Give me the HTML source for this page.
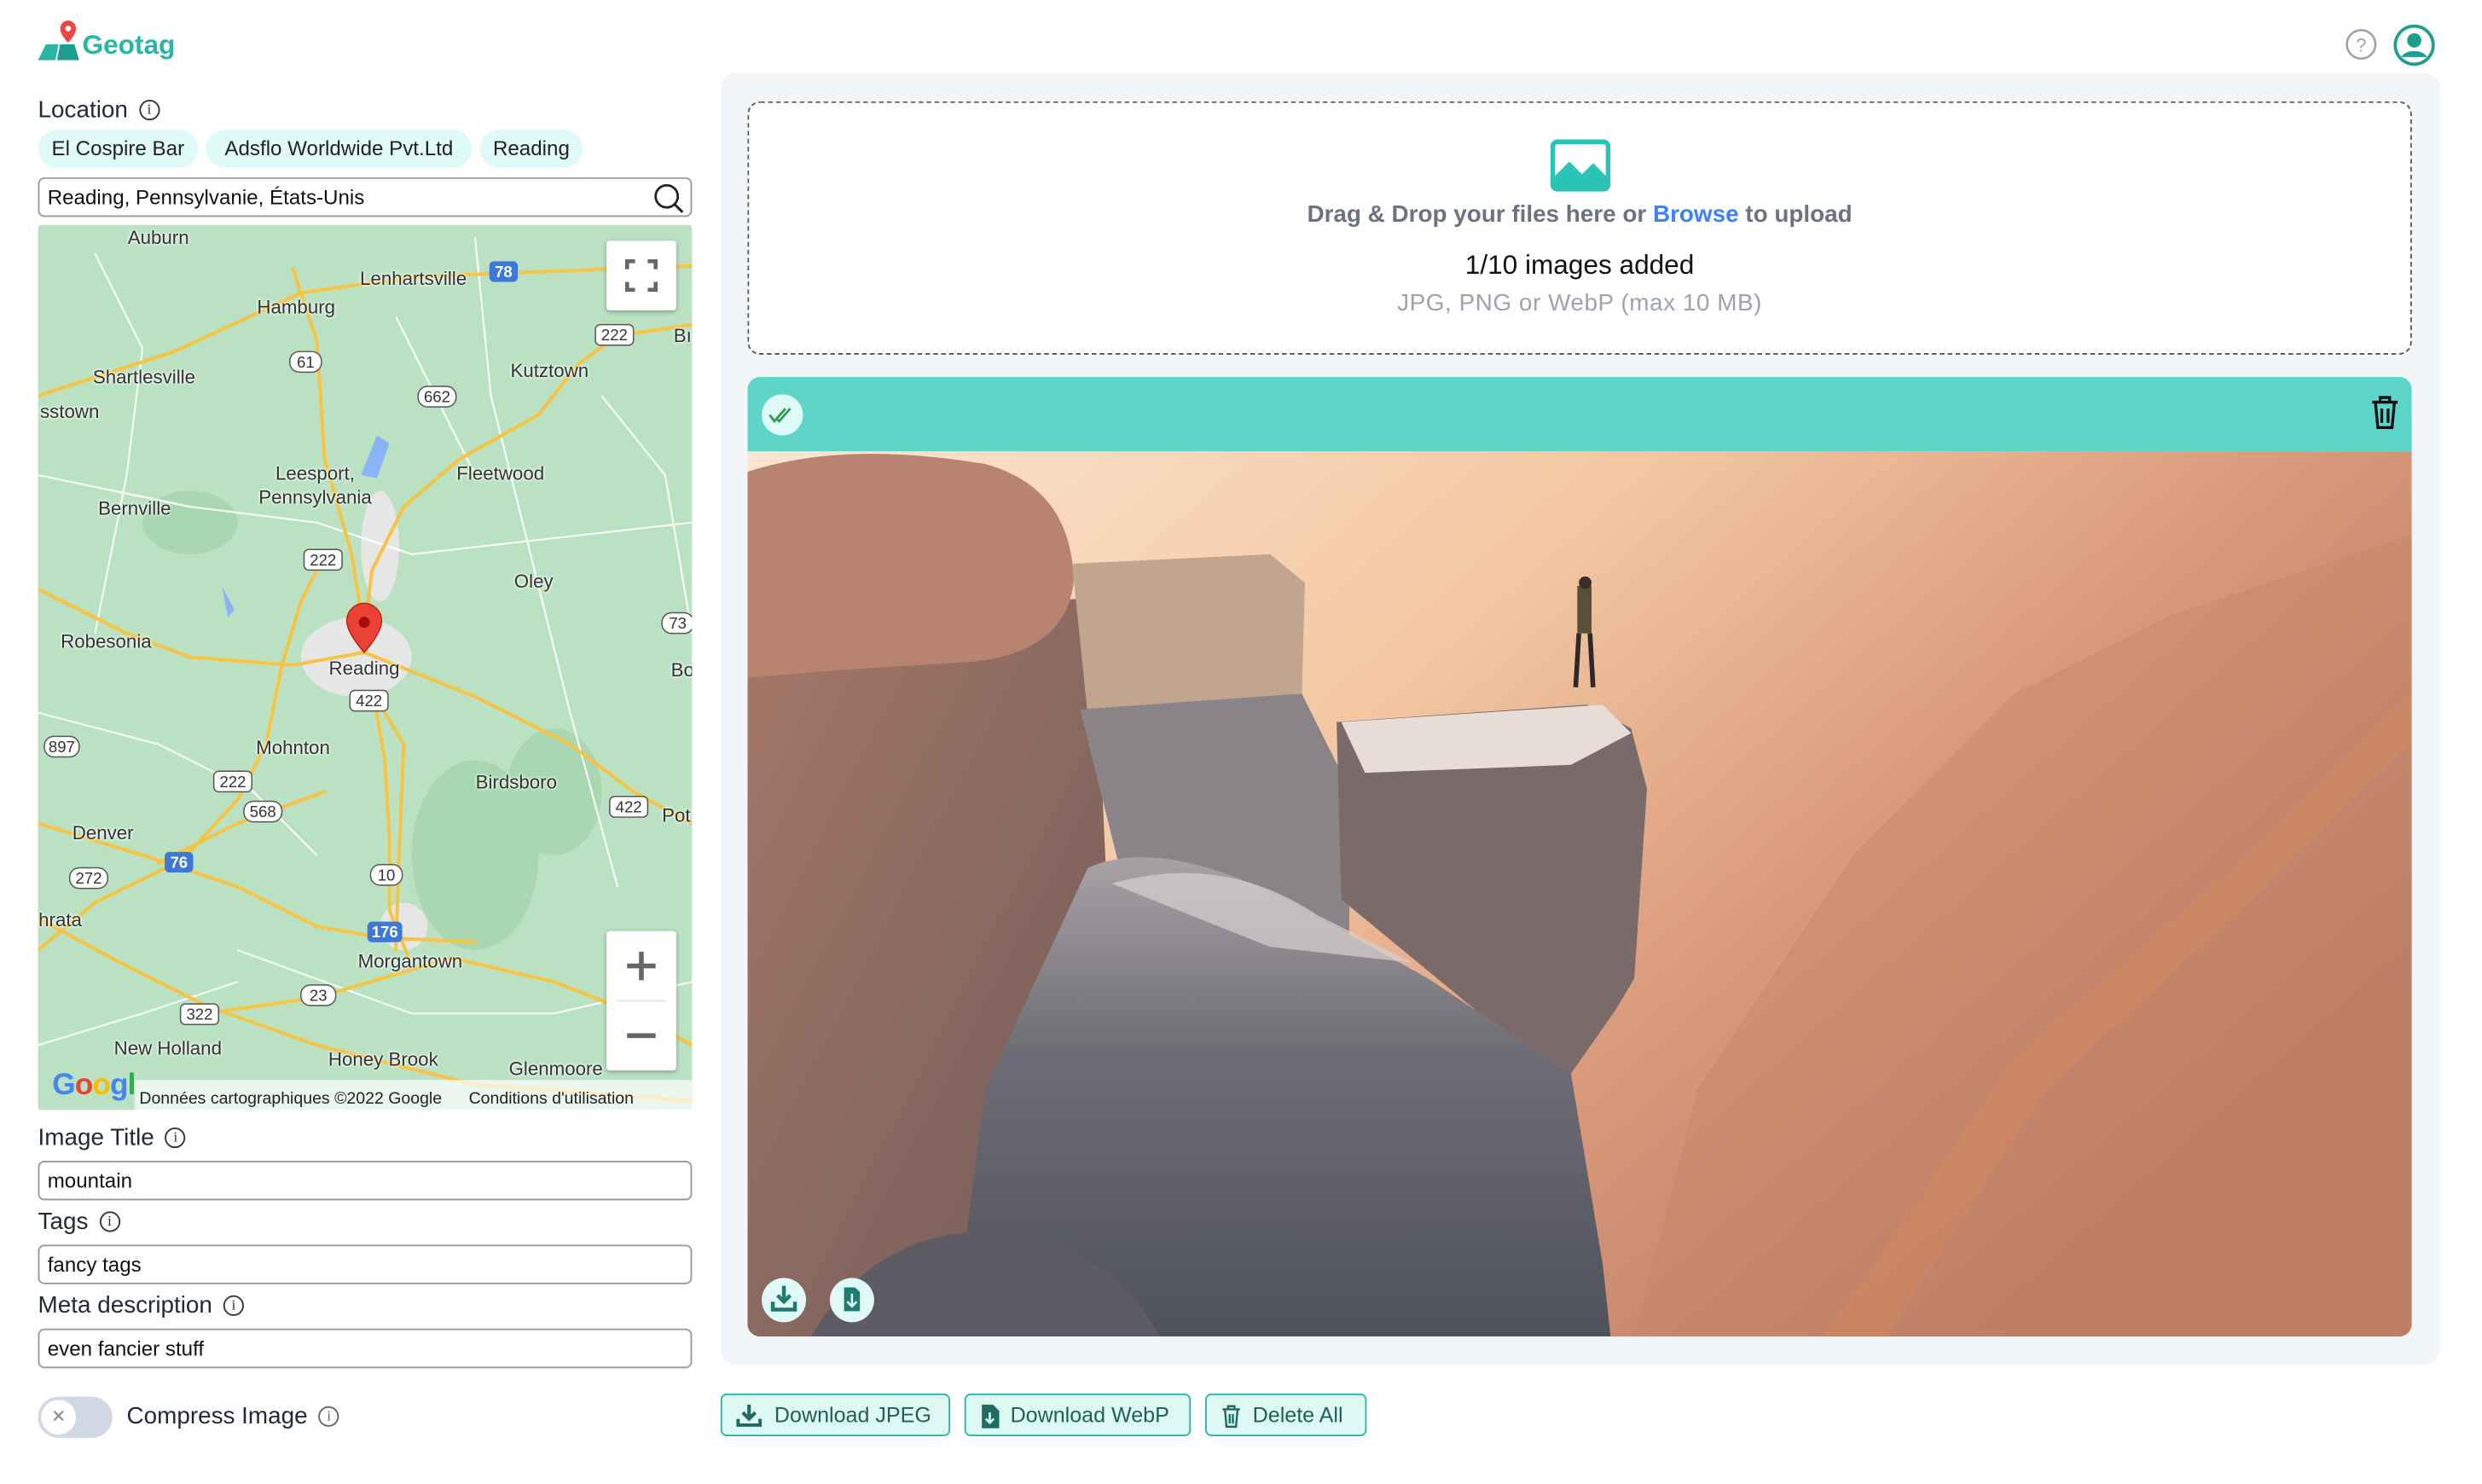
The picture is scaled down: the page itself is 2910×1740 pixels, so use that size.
<!DOCTYPE html>
<html><head><meta charset="utf-8">
<style>
html,body{margin:0;padding:0;background:#fff;width:2910px;height:1738px;overflow:hidden}
#r{position:absolute;left:0;top:0;width:1568px;height:937px;transform:scale(1.8567);transform-origin:0 0;font-family:"Liberation Sans",sans-serif;color:#1f2937}
.abs{position:absolute}
.lbl{position:absolute;left:24px;font-size:15px;color:#1f2937}
.info{display:inline-block;width:11px;height:11px;border:1.2px solid #333;border-radius:50%;font-size:9px;line-height:11px;text-align:center;vertical-align:2px;margin-left:7px;font-family:"Liberation Serif",serif}
.inp{position:absolute;left:24px;width:413px;height:25px;border:1.3px solid #999;border-radius:4px;font-size:13px;line-height:23px;padding-left:5px;box-sizing:border-box;color:#111}
.chip{position:absolute;top:82px;height:24px;line-height:24px;background:#dffaf8;border-radius:12px;font-size:13px;color:#222;text-align:center}
.ml{position:absolute;font-size:12px;color:#333;text-shadow:0 0 2px #fff,0 0 2px #fff;white-space:nowrap;transform:translate(-50%,-50%)}
.btn{position:absolute;top:880px;height:27px;border:1.3px solid #2bb5a5;border-radius:4px;background:#ddf7f3;color:#1f5f5a;font-size:13.5px;line-height:25px;box-sizing:border-box}
.btn svg{position:absolute;left:9px;top:6px}
</style></head><body><div id="r">

<svg class="abs" style="left:23px;top:11px" width="30" height="28" viewBox="0 0 30 28">
<path d="M1 27 L6 17 L14 17 L12 27 Z" fill="#2bb5a5"/><path d="M13 27 L15 17 L24 17 L27 27 Z" fill="#1f9e90"/>
<path d="M20 2 a5 5 0 0 1 5 5 c0 4 -5 9 -5 9 c0 0 -5 -5 -5 -9 a5 5 0 0 1 5 -5z" fill="#ef4444"/><circle cx="20" cy="7" r="1.8" fill="#fff"/>
</svg>
<div class="abs" style="left:52px;top:19px;font-size:17px;font-weight:bold;color:#2bb5a5">Geotag</div>

<svg class="abs" style="left:1481px;top:18px" width="20" height="20" viewBox="0 0 20 20"><circle cx="10" cy="10" r="9" fill="none" stroke="#9ca3af" stroke-width="1.4"/><text x="10" y="14.5" font-size="12" text-anchor="middle" fill="#9ca3af" font-family="Liberation Sans">?</text></svg>
<svg class="abs" style="left:1511px;top:15px" width="27" height="27" viewBox="0 0 27 27"><circle cx="13.5" cy="13.5" r="12" fill="none" stroke="#1f9e90" stroke-width="2"/><circle cx="13.5" cy="10.5" r="4.5" fill="#1f9e90"/><path d="M5.5 21 c2-5 14-5 16 0" fill="#1f9e90"/></svg>

<div class="lbl" style="top:61px">Location<span class="info">i</span></div>
<div class="chip" style="left:24px;width:101px">El Cospire Bar</div>
<div class="chip" style="left:130px;width:168px">Adsflo Worldwide Pvt.Ltd</div>
<div class="chip" style="left:303px;width:65px">Reading</div>
<div class="inp" style="top:112px">Reading, Pennsylvanie, États-Unis</div>
<svg class="abs" style="left:411px;top:114px" width="22" height="22" viewBox="0 0 22 22"><circle cx="10" cy="10" r="7" fill="none" stroke="#222" stroke-width="1.5"/><path d="M15 15 L20 20" stroke="#222" stroke-width="1.6"/></svg>

<div class="abs" style="left:24px;top:142px;width:413px;height:559px;background:#bbe1c3;overflow:hidden;border-radius:2px">
<svg class="abs" style="left:0;top:0" width="413" height="559" viewBox="24 142 413 559">
<g fill="#9fd3a9" opacity=".7"><ellipse cx="300" cy="540" rx="40" ry="60"/><ellipse cx="350" cy="500" rx="30" ry="40"/><ellipse cx="120" cy="330" rx="30" ry="20"/></g>
<g fill="#e6e6e6"><ellipse cx="225" cy="415" rx="35" ry="25"/><ellipse cx="240" cy="345" rx="12" ry="35"/><ellipse cx="255" cy="585" rx="15" ry="15"/></g>
<g fill="#8ab4f8"><path d="M228 300 l10 -25 l8 5 l-8 22z"/><path d="M140 370 l8 15 l-4 5z"/></g>
<g fill="none" stroke="#fff" stroke-width="1.2" opacity=".9">
<path d="M24 300 L120 320 L200 330 L260 350 L437 330"/><path d="M60 160 L90 220 L80 300 L60 400"/><path d="M300 150 L310 250 L330 330 L360 450 L390 560"/><path d="M24 450 L100 470 L160 500 L200 540"/><path d="M150 600 L260 640 L350 640 L437 620"/><path d="M380 250 L420 300 L437 400"/><path d="M24 660 L90 640 L150 620"/><path d="M250 200 L280 260 L300 300"/>
</g>
<g fill="none" stroke="#f5c445" stroke-width="2.2" stroke-linecap="round">
<path d="M24 250 L110 222 L190 185 L260 175 L330 172 L437 168"/>
<path d="M437 205 L390 212 L365 230 L340 262 L290 290 L255 320 L235 360 L230 398"/>
<path d="M185 170 L200 215 L205 290 L222 350 L230 398"/>
<path d="M24 372 L80 400 L120 415 L185 420 L230 412 L300 440 L360 470 L400 500 L437 520"/>
<path d="M205 350 L190 380 L178 420 L168 470 L150 505 L115 543 L60 570 L24 600"/>
<path d="M236 440 L243 480 L246 530 L246 575 L258 605"/>
<path d="M237 440 L255 470 L252 540 L250 600"/>
<path d="M24 520 L90 540 L150 560 L200 585 L240 592 L300 595"/>
<path d="M24 580 L80 610 L130 635 L200 660 L300 685 L437 695"/>
<path d="M130 640 L200 630 L285 605 L350 620 L400 640 L437 660"/>
<path d="M100 545 L150 520 L205 500"/>
</g>
<g font-family="Liberation Sans" font-size="10" text-anchor="middle">
<g fill="#fff" stroke="#555" stroke-width=".8"><rect x="183" y="222" width="20" height="13" rx="6"/><rect x="264" y="244" width="24" height="13" rx="6"/><rect x="192" y="347" width="24" height="13" rx="3"/><rect x="221" y="436" width="24" height="13" rx="3"/><rect x="28" y="465" width="22" height="13" rx="6"/><rect x="135" y="487" width="24" height="13" rx="3"/><rect x="154" y="506" width="24" height="13" rx="6"/><rect x="44" y="548" width="24" height="13" rx="6"/><rect x="234" y="546" width="20" height="13" rx="6"/><rect x="114" y="634" width="24" height="13" rx="3"/><rect x="190" y="622" width="22" height="13" rx="6"/><rect x="376" y="205" width="24" height="13" rx="3"/><rect x="385" y="503" width="24" height="13" rx="3"/><rect x="418" y="387" width="20" height="13" rx="6"/></g>
<g fill="#333"><text x="193" y="232">61</text><text x="276" y="254">662</text><text x="204" y="357">222</text><text x="233" y="446">422</text><text x="39" y="475">897</text><text x="147" y="497">222</text><text x="166" y="516">568</text><text x="56" y="558">272</text><text x="244" y="556">10</text><text x="126" y="644">322</text><text x="201" y="632">23</text><text x="388" y="215">222</text><text x="397" y="513">422</text><text x="428" y="397">73</text></g>
<g fill="#3b78d8"><rect x="309" y="165" width="18" height="13" rx="3"/><rect x="104" y="538" width="18" height="13" rx="3"/><rect x="232" y="582" width="22" height="13" rx="3"/></g>
<g fill="#fff" font-weight="bold"><text x="318" y="175">78</text><text x="113" y="548">76</text><text x="243" y="592">176</text></g>
</g>
<path d="M230 381 a11 11 0 0 1 11 11 c0 8 -11 20 -11 20 c0 0 -11 -12 -11 -20 a11 11 0 0 1 11 -11z" fill="#ea4335" stroke="#b3261e" stroke-width=".8"/><circle cx="230" cy="393" r="3.5" fill="#a50e0e"/>
</svg>
<div class="ml" style="left:76px;top:8px">Auburn</div>
<div class="ml" style="left:237px;top:34px">Lenhartsville</div>
<div class="ml" style="left:163px;top:52px">Hamburg</div>
<div class="ml" style="left:67px;top:96px">Shartlesville</div>
<div class="ml" style="left:20px;top:118px">sstown</div>
<div class="ml" style="left:323px;top:92px">Kutztown</div>
<div class="ml" style="left:175px;top:157px">Leesport,</div>
<div class="ml" style="left:175px;top:172px">Pennsylvania</div>
<div class="ml" style="left:292px;top:157px">Fleetwood</div>
<div class="ml" style="left:61px;top:179px">Bernville</div>
<div class="ml" style="left:313px;top:225px">Oley</div>
<div class="ml" style="left:43px;top:263px">Robesonia</div>
<div class="ml" style="left:206px;top:280px">Reading</div>
<div class="ml" style="left:161px;top:330px">Mohnton</div>
<div class="ml" style="left:302px;top:352px">Birdsboro</div>
<div class="ml" style="left:41px;top:384px">Denver</div>
<div class="ml" style="left:14px;top:439px">hrata</div>
<div class="ml" style="left:235px;top:465px">Morgantown</div>
<div class="ml" style="left:82px;top:520px">New Holland</div>
<div class="ml" style="left:218px;top:527px">Honey Brook</div>
<div class="ml" style="left:327px;top:533px">Glenmoore</div>
<div class="ml" style="left:407px;top:70px">Bı</div>
<div class="ml" style="left:407px;top:281px">Bo</div>
<div class="ml" style="left:403px;top:373px">Pot</div>
<div class="abs" style="left:359px;top:10px;width:44px;height:44px;background:#fff;border-radius:2px;box-shadow:0 1px 3px rgba(0,0,0,.3)">
<svg width="44" height="44" viewBox="0 0 44 44" fill="none" stroke="#666" stroke-width="2.5"><path d="M13 18v-5h5M26 13h5v5M31 26v5h-5M18 31h-5v-5"/></svg></div>
<div class="abs" style="left:359px;top:446px;width:44px;height:88px;background:#fff;border-radius:2px;box-shadow:0 1px 3px rgba(0,0,0,.3)">
<svg width="44" height="88" viewBox="0 0 44 88" stroke="#666" stroke-width="3"><path d="M13 22h18M22 13v18M13 66h18"/><path d="M6 44h32" stroke="#e6e6e6" stroke-width="1"/></svg></div>
<div class="abs" style="left:0;top:540px;width:413px;height:19px;background:linear-gradient(90deg,rgba(255,255,255,0) 0,rgba(255,255,255,0) 60px,rgba(255,255,255,.7) 62px)"></div>
<div class="abs" style="left:9px;top:533px;font-size:19px;font-weight:bold;color:#4285f4;letter-spacing:-.5px">G<span style="color:#ea4335">o</span><span style="color:#fbbc05">o</span>g<span style="color:#34a853">l</span></div>
<div class="abs" style="left:64px;top:546px;font-size:10.5px;color:#222">Données cartographiques ©2022 Google</div>
<div class="abs" style="left:272px;top:546px;font-size:10.5px;color:#222">Conditions d'utilisation</div>
</div>

<div class="lbl" style="top:710px">Image Title<span class="info">i</span></div>
<div class="inp" style="top:733px">mountain</div>
<div class="lbl" style="top:763px">Tags<span class="info">i</span></div>
<div class="inp" style="top:786px">fancy tags</div>
<div class="lbl" style="top:816px">Meta description<span class="info">i</span></div>
<div class="inp" style="top:839px">even fancier stuff</div>

<div class="abs" style="left:24px;top:882px;width:47px;height:26px;border-radius:13px;background:#cfd8e3"></div>
<div class="abs" style="left:26px;top:884px;width:22px;height:22px;border-radius:50%;background:#fff;font-size:11px;text-align:center;line-height:22px;color:#888">✕</div>
<div class="abs" style="left:80px;top:886px;font-size:15px;color:#1f2937">Compress Image<span class="info" style="border-color:#666;color:#666">i</span></div>

<div class="abs" style="left:455px;top:46px;width:1086px;height:816px;background:#f3f6f8;border-radius:10px"></div>
<div class="abs" style="left:472px;top:64px;width:1051px;height:160px;background:#fff;border:1.3px dashed #555;border-radius:8px;box-sizing:border-box"></div>
<svg class="abs" style="left:979px;top:88px" width="38" height="33" viewBox="0 0 38 33"><rect x="1.5" y="1.5" width="35" height="30" rx="3" fill="#fff" stroke="#2bc4b4" stroke-width="3"/><path d="M2 31 L2 24 L12 14 L20 22 L27 15 L36 24 L36 31 Z" fill="#2bc4b4"/></svg>
<div class="abs" style="left:472px;top:127px;width:1051px;text-align:center;font-size:15px;font-weight:bold;color:#6b7280">Drag &amp; Drop your files here or <span style="color:#3b82f6">Browse</span> to upload</div>
<div class="abs" style="left:472px;top:158px;width:1051px;text-align:center;font-size:17px;color:#111">1/10 images added</div>
<div class="abs" style="left:472px;top:183px;width:1051px;text-align:center;font-size:15px;color:#9ca3af;letter-spacing:.3px">JPG, PNG or WebP (max 10 MB)</div>

<div class="abs" style="left:472px;top:238px;width:1051px;height:606px;border-radius:8px;overflow:hidden">
<svg width="1051" height="606" viewBox="0 0 1051 606">
<defs>
<linearGradient id="sky" x1="0" y1="0" x2="1" y2=".6"><stop offset="0" stop-color="#fbe6d2"/><stop offset=".4" stop-color="#f4c7a2"/><stop offset=".7" stop-color="#d7977a"/><stop offset="1" stop-color="#b57a65"/></linearGradient>
<linearGradient id="rk" x1="0" y1="0" x2="0" y2="1"><stop offset="0" stop-color="#a8a2a6"/><stop offset=".4" stop-color="#6f6d75"/><stop offset="1" stop-color="#4f525c"/></linearGradient>
<linearGradient id="br" x1="0" y1="0" x2="1" y2="1"><stop offset="0" stop-color="#a57868"/><stop offset="1" stop-color="#6f5a58"/></linearGradient>
</defs>
<rect y="47" width="1051" height="559" fill="url(#sky)"/>
<path d="M560 606 L600 450 L700 300 L800 200 L900 150 L1051 100 L1051 606Z" fill="#c68669" opacity=".45"/>
<path d="M680 606 L800 430 L950 300 L1051 200 L1051 230 L950 330 L820 450 L720 606Z" fill="#d98a5d" opacity=".4"/>
<path d="M0 155 L0 606 L240 606 L224 260 L210 140 Z" fill="url(#br)"/>
<path d="M0 60 Q60 40 150 55 Q205 70 206 130 Q200 175 140 180 L60 185 L0 190 Z" fill="#b8846f"/>
<path d="M205 118 L330 112 L352 130 L350 205 L215 215 Z" fill="#c1a58e"/>
<path d="M210 210 L350 200 L380 260 L380 370 L240 330 Z" fill="#8a8488"/>
<path d="M372 218 L530 207 L558 222 L568 260 L560 380 L548 400 L520 440 L460 400 L375 330 Z" fill="#7a6a6a"/>
<path d="M375 218 L540 207 L558 225 L520 245 L390 250 Z" fill="#e6dcd8"/>
<path d="M215 310 Q260 290 340 330 L430 380 L520 440 L540 560 L545 606 L130 606 L150 450 Z" fill="url(#rk)"/>
<path d="M230 320 Q300 300 360 340 L420 370 L330 360 Z" fill="#d8d0d0" opacity=".7"/>
<path d="M40 606 Q80 540 150 540 Q230 545 260 606Z" fill="#5d5c64"/>
<rect x="524" y="132" width="9" height="30" fill="#5a5038"/><circle cx="529" cy="130" r="4" fill="#3a2f2a"/><path d="M525 162 L523 196 M532 162 L534 196" stroke="#2d2a2c" stroke-width="3"/>
<rect width="1051" height="47" fill="#5dd5c8"/>
<circle cx="22" cy="24" r="13" fill="#dffaf6"/><path d="M14 24 l3 4 l7 -8 M19 27 l1 1 l7 -8" fill="none" stroke="#2e9e52" stroke-width="1.5"/>
<g fill="none" stroke="#111" stroke-width="1.8"><path d="M1026 16h16M1031 16v-3h6v3M1028 16l1.5 16h9l1.5 -16M1032 20v9M1036 20v9"/></g>
<circle cx="23" cy="583" r="14" fill="#dffaf6"/><path d="M23 574v10M19 580l4 4 4 -4M16 584v5h14v-5" fill="none" stroke="#1f7a70" stroke-width="2.4"/>
<circle cx="66" cy="583" r="14" fill="#dffaf6"/><path d="M61 575h7l3 3v12h-10z" fill="#1f7a70"/><path d="M66 579v7M63 584l3 3 3 -3" fill="none" stroke="#dffaf6" stroke-width="1.4"/>
</svg>
</div>

<div class="btn" style="left:455px;width:145px;padding-left:33px"><svg width="16" height="14" viewBox="0 0 16 14"><path d="M8 0v8M4 5l4 4 4-4M1 9v4h14v-4" fill="none" stroke="#1f6b64" stroke-width="2.2"/></svg>Download JPEG</div>
<div class="btn" style="left:609px;width:143px;padding-left:28px"><svg width="12" height="15" viewBox="0 0 12 15"><path d="M1 0h7l4 4v11h-11z" fill="#1f6b64"/><path d="M6 5v6M3.5 9l2.5 2.5 2.5-2.5" fill="none" stroke="#ddf7f3" stroke-width="1.4"/></svg>Download WebP</div>
<div class="btn" style="left:761px;width:102px;padding-left:29px"><svg width="13" height="15" viewBox="0 0 13 15"><path d="M1 3h11M4.5 3V1h4v2M2.5 3l1 11h6l1-11M5.5 6v6M7.5 6v6" fill="none" stroke="#1f6b64" stroke-width="1.3"/></svg>Delete All</div>

</div></body></html>
